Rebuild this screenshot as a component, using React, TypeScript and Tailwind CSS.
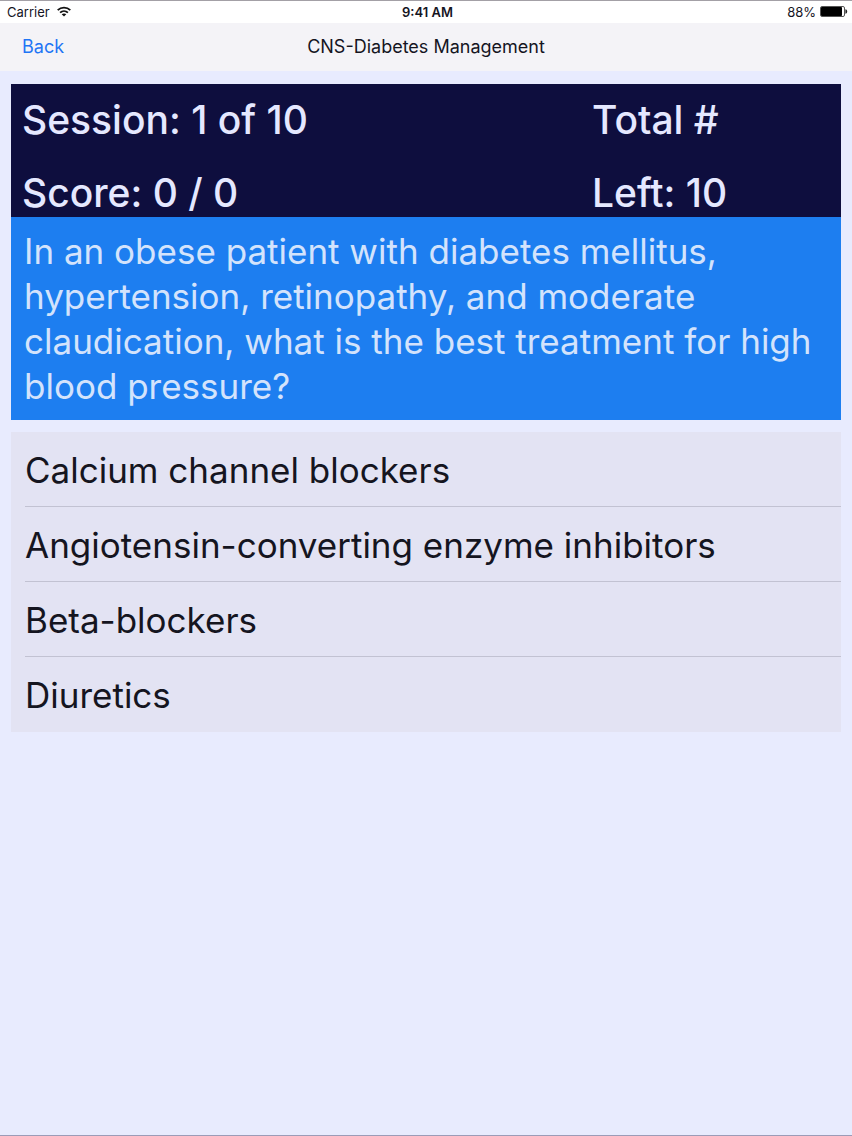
const answers = [
  "Calcium channel blockers",
  "Angiotensin-converting enzyme inhibitors",
  "Beta-blockers",
  "Diuretics",
];

function WifiIcon() {
  return (
    <svg className="h-3 w-4" viewBox="0 0 16 12" fill="none" stroke="#111" strokeWidth="1.8" aria-hidden="true">
      <path d="M1.7 4.1C5.2 0.7 10.8 0.7 14.3 4.1" />
      <path d="M4.1 6.6C6.3 4.5 9.7 4.5 11.9 6.6" />
      <path d="M8 10.6 5.7 8.2C6.9 7.1 9.1 7.1 10.3 8.2Z" fill="#111" stroke="none" />
    </svg>
  );
}

function BatteryIcon() {
  return (
    <svg className="h-3 w-7" viewBox="0 0 28 12" aria-hidden="true">
      <rect x="0.5" y="0.5" width="24" height="10" rx="1.5" fill="#fff" stroke="#555" />
      <rect x="1" y="1" width="21" height="9" rx="0.8" fill="#000" />
      <path d="M25.4 3.2C27.8 3.6 27.8 7.4 25.4 7.8Z" fill="#222" />
    </svg>
  );
}

export default function App() {
  return (
    <div className="flex min-h-screen flex-col border-y border-t-[#a3a0a6] border-b-[#9c9cb8] bg-[#e8ebfe] font-['Inter','Liberation_Sans',sans-serif] text-[#15151f]">
      <div className="grid h-[22px] grid-cols-3 items-center bg-white pr-1 pl-[7px] text-[13px] leading-4">
        <div className="flex items-center gap-1.5">
          <span>Carrier</span>
          <WifiIcon />
        </div>
        <span className="text-center font-semibold">9:41 AM</span>
        <div className="flex items-center justify-end gap-1">
          <span>88%</span>
          <BatteryIcon />
        </div>
      </div>

      <header className="grid h-12 grid-cols-[1fr_auto_1fr] items-center bg-[#f4f3f7] px-[22px] text-lg">
        <a href="#back" className="justify-self-start text-[#1f75f5]">
          Back
        </a>
        <h1>CNS-Diabetes Management</h1>
      </header>

      <main className="px-[11px] pt-[13px]">
        <section className="grid grid-cols-[1fr_248px] gap-y-[25px] bg-[#0e0e3e] px-[11px] pt-3 text-[39px] leading-[48px] font-medium text-[#e5e8ff]">
          <p>Session: 1 of 10</p>
          <p className="pl-2.5">Total #</p>
          <p>Score: 0 / 0</p>
          <p className="pl-2.5">Left: 10</p>
        </section>

        <section className="bg-[#1d7ef0] px-[13px] pt-3 pb-[11px]">
          <h2 className="text-[35px] leading-[45px] font-normal text-[#d3e3fc]">
            In an obese patient with diabetes mellitus, hypertension, retinopathy, and moderate
            claudication, what is the best treatment for high blood pressure?
          </h2>
        </section>

        <ul className="mt-3 bg-[#e3e3f3]">
          {answers.map((answer) => (
            <li key={answer} className="group pl-[14px]">
              <button
                type="button"
                className="block w-full border-b border-[#c2c2d2] pt-[14px] pb-3 text-left text-[35px] leading-[48px] group-last:border-transparent"
              >
                {answer}
              </button>
            </li>
          ))}
        </ul>
      </main>
    </div>
  );
}
